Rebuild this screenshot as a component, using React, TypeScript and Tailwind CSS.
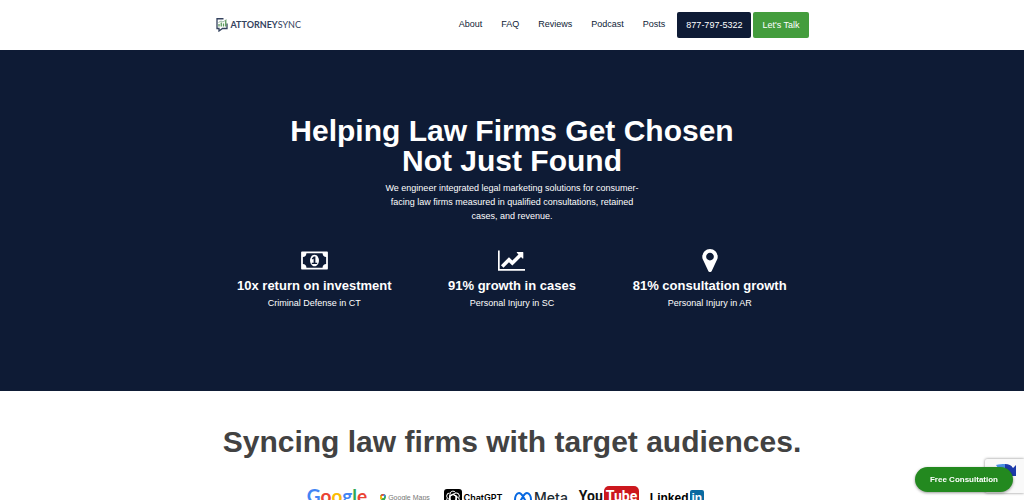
import React from 'react';

const navItems = [
  { label: 'About', href: '#about' },
  { label: 'FAQ', href: '#faq' },
  { label: 'Reviews', href: '#reviews' },
  { label: 'Podcast', href: '#podcast' },
  { label: 'Posts', href: '#posts' },
];

const stats = [
  { id: 'ct', icon: MoneyIcon, title: '10x return on investment', detail: 'Criminal Defense in CT' },
  { id: 'sc', icon: ChartIcon, title: '91% growth in cases', detail: 'Personal Injury in SC' },
  { id: 'ar', icon: MarkerIcon, title: '81% consultation growth', detail: 'Personal Injury in AR' },
];

function MoneyIcon() {
  return (
    <svg viewBox="0 0 1920 1792" className="h-[25px] w-[27px] fill-white" aria-hidden="true">
      <path d="M768 1152h384v-96h-128V608H910L762 745l77 80q42-37 55-57h2v288H768v96zm512-256q0 70-21 142t-59.5 134-101.5 101-138 39-138-39-101.5-101T661 1038t-21-142 21-142 59.5-134T822 519t138-39 138 39 101.5 101 59.5 134 21 142zm512 256V640q-106 0-181-75t-75-181H384q0 106-75 181t-181 75v512q106 0 181 75t75 181h1152q0-106 75-181t181-75zm128-832v1152q0 26-19 45t-45 19H64q-26 0-45-19t-19-45V320q0-26 19-45t45-19h1792q26 0 45 19t19 45z" />
    </svg>
  );
}

function ChartIcon() {
  return (
    <svg viewBox="0 -128 2048 1792" className="h-[25px] w-[27px] fill-white" aria-hidden="true">
      <path d="M2048 1408v128H0V0h128v1408h1920zM1920 160v435q0 21-19.5 29.5T1865 617l-121-121-633 633q-10 10-23 10t-23-10L832 896l-416 416-192-192 585-585q10-10 23-10t23 10l233 233 464-464-121-121q-16-16-7.5-35.5T1453 128h435q14 0 23 9t9 23z" />
    </svg>
  );
}

function MarkerIcon() {
  return (
    <svg viewBox="0 0 1024 1792" className="h-[27px] w-[16px] fill-white" aria-hidden="true">
      <path d="M768 640q0-106-75-181t-181-75-181 75-75 181 75 181 181 75 181-75 75-181zm256 0q0 109-33 179l-364 774q-16 33-47.5 52t-67.5 19-67.5-19-46.5-52L33 819Q0 749 0 640q0-212 150-362t362-150 362 150 150 362z" />
    </svg>
  );
}

function Logo() {
  return (
    <a href="#home" className="flex items-center gap-[3px] text-[#34425e]">
      <svg viewBox="0 0 24 28" className="h-[14px] w-[12px]" fill="none" aria-hidden="true">
        <path d="M15 1.500H2V21h4v5l7-5h9V11" stroke="#34425e" strokeWidth="2.600" />
        <path d="M6 17v-5M10.500 17V9M15 17v-6M19.500 17V4" stroke="#5b9a5b" strokeWidth="2.600" />
        <path d="M5 9l5-3 4 2 7-5" stroke="#7fa68a" strokeWidth="1.600" />
      </svg>
      <span className="font-['Lato','Liberation_Sans',sans-serif] text-[9px] leading-[14px]">
        <b className="font-bold">ATTORNEY</b>SYNC
      </span>
    </a>
  );
}

function Header() {
  return (
    <header className="bg-white">
      <div className="mx-auto flex h-[50px] max-w-[593px] items-center justify-between">
        <Logo />
        <div className="flex items-center">
          <nav className="flex gap-[19px] pr-3 text-[9px] text-[#0e1b35]">
            {navItems.map((item) => (
              <a key={item.label} href={item.href}>
                {item.label}
              </a>
            ))}
          </nav>
          <div className="flex gap-[2px] text-[9px] leading-[26px] text-white">
            <a href="tel:877-797-5322" className="rounded-[2px] bg-[#0e1b35] px-[9px]">
              877-797-5322
            </a>
            <a href="#talk" className="rounded-[2px] bg-[#449d3d] px-[9px]">
              Let's Talk
            </a>
          </div>
        </div>
      </div>
    </header>
  );
}

function Hero() {
  return (
    <section className="bg-[#0e1b35] pt-[66px] pb-[81px] text-center text-white">
      <h1 className="text-[30px] leading-[30px] font-bold">
        Helping Law Firms Get Chosen
        <br />
        Not Just Found
      </h1>
      <p className="mx-auto mt-[5px] max-w-[256px] text-[9px] leading-[14px]">
        We engineer integrated legal marketing solutions for consumer-facing law firms measured in qualified
        consultations, retained cases, and revenue.
      </p>
      <div className="mx-auto mt-[23px] grid max-w-[593px] grid-cols-3">
        {stats.map((stat) => (
          <div key={stat.id} className="flex flex-col items-center">
            <div className="flex h-[30px] items-center pb-[2px]">
              <stat.icon />
            </div>
            <h2 className="text-[13px] leading-[20px] font-bold">{stat.title}</h2>
            <p className="text-[9px] leading-[14px]">{stat.detail}</p>
          </div>
        ))}
      </div>
    </section>
  );
}

function Partners() {
  return (
    <section className="bg-white pt-8 text-center">
      <h2 className="text-[30px] leading-[38px] font-bold text-[#424242]">Syncing law firms with target audiences.</h2>
      <div className="mx-auto mt-[25px] grid max-w-[418px] grid-cols-6 place-items-center pr-[10px] whitespace-nowrap">
        <span className="self-start font-['Lato','Liberation_Sans',sans-serif] text-[19px] leading-[20px] font-bold text-[#4285f4]">
          G<span className="text-[#ea4335]">o</span>
          <span className="text-[#fbbc05]">o</span>g<span className="text-[#34a853]">l</span>
          <span className="text-[#ea4335]">e</span>
        </span>
        <span className="flex items-center gap-[2px] text-[7px] leading-[24px] text-[#777]">
          <svg viewBox="0 0 12 18" className="h-[9px] w-[6px]" aria-hidden="true">
            <path d="M6 0a6 6 0 0 0-6 6c0 4 4 6 6 12 2-6 6-8 6-12a6 6 0 0 0-6-6z" fill="#34a853" />
            <path d="M0 6c0 3 1 4 2 6l5-6-4-4C1 3 0 4 0 6z" fill="#fbbc04" />
            <path d="M1.500 2.500L5 6l4-5C6-1 3 0 1.500 2.500z" fill="#ea4335" />
            <path d="M8 0.400L5 6l6.800-1.500C11 2 10 1 8 0.400z" fill="#4285f4" />
            <circle cx="6" cy="6" r="2.300" fill="#fff" />
          </svg>
          Google Maps
        </span>
        <span className="flex items-center gap-[2px] font-['Inter','Liberation_Sans',sans-serif] text-[9px] leading-[24px] font-semibold text-black">
          <svg viewBox="0 0 36 36" className="h-[18px] w-[18px]" aria-hidden="true">
            <rect width="36" height="36" rx="6" fill="#000" />
            <g fill="none" stroke="#fff" strokeWidth="2">
              {[0, 60, 120, 180, 240, 300].map((angle) => (
                <path key={angle} transform={`rotate(${angle} 18 18)`} d="M12 22v-12a6 6 0 0 1 11-3M12 14l6-3.500 8 4.500" />
              ))}
            </g>
          </svg>
          ChatGPT
        </span>
        <span className="flex items-center gap-[2px] font-['Inter','Liberation_Sans',sans-serif] text-[14px] leading-[24px] font-medium text-[#1c2b33]">
          <svg viewBox="0 0 36 24" className="h-[12px] w-[18px]" fill="none" aria-hidden="true">
            <path
              d="M18 9C15 4 13 2 10 2 5 2 2 9 2 15c0 9 8 9 12 1l4-7c3-5 5-7 8-7 5 0 8 7 8 13 0 9-8 9-12 1z"
              stroke="#0668e1"
              strokeWidth="4"
            />
          </svg>
          Meta
        </span>
        <span className="flex items-center gap-[1px] self-start font-['Roboto','Liberation_Sans',sans-serif] text-[14px] leading-[20px] font-bold text-[#111]">
          You
          <span className="rounded-[5px] bg-[#cc181e] px-[2px] text-white">Tube</span>
        </span>
        <span className="flex items-center gap-[1px] text-[12px] leading-[24px] font-bold text-black">
          Linked
          <span className="rounded-[2px] bg-[#0a6aa1] px-[2px] leading-[17px] text-white">in</span>
        </span>
      </div>
    </section>
  );
}

function Recaptcha() {
  return (
    <div className="fixed right-0 bottom-[7px] h-[34px] w-[39px] overflow-hidden rounded-l-[2px] bg-[#f9f9f9] pt-[5px] pl-[10px] shadow-[0_0_3px_#808080]">
      <svg viewBox="0 0 22 20" className="h-[20px] w-[22px]" aria-hidden="true">
        <path d="M10 0v6C6 6 5 8 4 11L0 7 3 4 1 1c3-1 6-1 9-1z" fill="#4a90e2" />
        <path d="M10 0c4 0 6 1 8 4l3-3v11h-11l3-3c-1-2-2-3-3-3z" fill="#1c3aa9" />
      </svg>
    </div>
  );
}

export default function App() {
  return (
    <div className="min-h-screen bg-white font-['Liberation_Sans',Arial,sans-serif]">
      <Header />
      <main>
        <Hero />
        <Partners />
      </main>
      <Recaptcha />
      <button
        type="button"
        className="fixed right-[11px] bottom-[8px] rounded-full bg-[#23891f] px-[15px] text-[8px] leading-[25px] font-bold text-white shadow-[0_1px_3px_rgba(0,0,0,0.4)]"
      >
        Free Consultation
      </button>
    </div>
  );
}
